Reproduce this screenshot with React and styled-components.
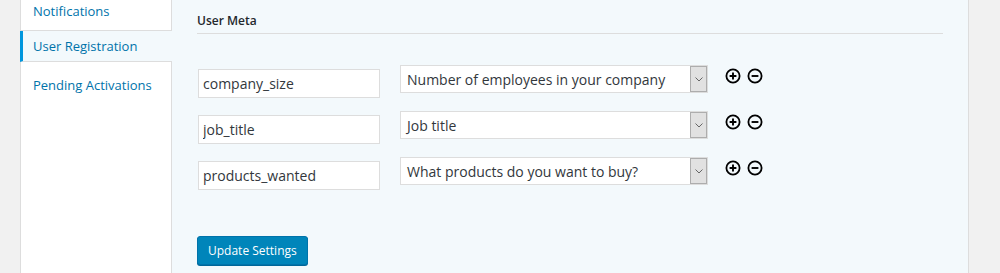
import React from 'react';
import styled, { createGlobalStyle } from 'styled-components';

const GlobalStyle = createGlobalStyle`
  html, body {
    margin: 0;
    padding: 0;
    background: #f1f1f1;
    font-family: "Open Sans", "Noto Sans", sans-serif;
    color: #23282d;
  }
`;

const metaRows = [
  { key: 'company_size', label: 'Number of employees in your company' },
  { key: 'job_title', label: 'Job title' },
  { key: 'products_wanted', label: 'What products do you want to buy?' },
];

const PlusIcon = () => (
  <svg width="16" height="16" viewBox="0 0 16 16">
    <circle cx="8" cy="8" r="6.6" fill="none" stroke="#000" strokeWidth="1.8" />
    <path d="M8 4.6v6.8M4.6 8h6.8" stroke="#000" strokeWidth="1.9" />
  </svg>
);

const MinusIcon = () => (
  <svg width="16" height="16" viewBox="0 0 16 16">
    <circle cx="8" cy="8" r="6.6" fill="none" stroke="#000" strokeWidth="1.8" />
    <path d="M4.6 8h6.8" stroke="#000" strokeWidth="1.9" />
  </svg>
);

const Chevron = () => (
  <svg width="8" height="5" viewBox="0 0 8 5">
    <path d="M0.5 0.5L4 4l3.5-3.5" fill="none" stroke="#666" strokeWidth="1" />
  </svg>
);

const App = () => {
  return (
    <Page>
      <GlobalStyle />
      <Sidebar>
        <Tab first>Notifications</Tab>
        <Tab active>User Registration</Tab>
        <Tab last>Pending Activations</Tab>
      </Sidebar>
      <Content>
        <Heading>User Meta</Heading>
        <Rows>
          {metaRows.map((row) => (
            <Row key={row.key}>
              <TextInput defaultValue={row.key} />
              <Select>
                <span>{row.label}</span>
                <Arrow>
                  <Chevron />
                </Arrow>
              </Select>
              <Actions>
                <PlusIcon />
                <MinusIcon />
              </Actions>
            </Row>
          ))}
        </Rows>
        <Button>Update Settings</Button>
      </Content>
    </Page>
  );
};

export default App;

const Page = styled.div`
  display: flex;
  align-items: stretch;
  height: 273px;
  padding-left: 20px;
  overflow: hidden;
`;

const Sidebar = styled.div`
  width: 150px;
  flex-shrink: 0;
  background: #fff;
  border-left: 1px solid #ddd;
  border-right: 1px solid #ddd;
  position: relative;
  z-index: 1;
`;

const Tab = styled.div`
  height: ${(p) => (p.last ? 'auto' : p.first ? '30px' : '30px')};
  line-height: ${(p) => (p.active ? '30px' : '22px')};
  padding-left: ${(p) => (p.active ? '10px' : '12px')};
  padding-top: ${(p) => (p.last ? '12px' : '0')};
  font-size: 13px;
  color: #0073aa;
  border-bottom: ${(p) => (p.last ? 'none' : '1px solid #ddd')};
  border-left: ${(p) => (p.active ? '3px solid #0096dd' : 'none')};
  margin-left: ${(p) => (p.active ? '-1px' : '0')};
  margin-right: ${(p) => (p.active ? '-1px' : '0')};
  background: ${(p) => (p.active ? '#f3f9fc' : 'transparent')};
`;

const Content = styled.div`
  width: 746px;
  flex-shrink: 0;
  background: #f3f9fc;
  border-right: 1px solid #ddd;
  padding: 0 25px;
`;

const Heading = styled.h3`
  margin: 0;
  padding: 12px 0 4px;
  font-size: 12px;
  line-height: 17px;
  font-weight: 600;
  color: #23282d;
  border-bottom: 1px solid #ddd;
`;

const Rows = styled.div`
  display: flex;
  flex-direction: column;
  gap: 13px;
  margin-top: 31px;
`;

const Row = styled.div`
  display: flex;
  align-items: flex-start;
`;

const TextInput = styled.input`
  box-sizing: border-box;
  width: 182px;
  height: 29px;
  margin: 4px 0 0 1px;
  padding: 0 4px;
  border: 1px solid #ddd;
  background: #fff;
  font-family: "Open Sans", "Noto Sans", sans-serif;
  font-size: 14px;
  color: #32373c;
  outline: none;
`;

const Select = styled.div`
  box-sizing: border-box;
  display: flex;
  align-items: center;
  justify-content: space-between;
  width: 308px;
  height: 28px;
  margin-left: 20px;
  padding-left: 6px;
  border: 1px solid #ddd;
  background: #fff;
  font-size: 14px;
  color: #32373c;
`;

const Arrow = styled.div`
  display: flex;
  align-items: center;
  justify-content: center;
  width: 17px;
  height: 26px;
  background: #e1e1e1;
  border: 1px solid #adadad;
  box-sizing: border-box;
`;

const Actions = styled.div`
  display: flex;
  gap: 6px;
  margin: 3px 0 0 17px;
`;

const Button = styled.button`
  display: block;
  margin-top: 46px;
  height: 29px;
  padding: 0 10px;
  background: #0085ba;
  border: 1px solid #0073aa;
  border-radius: 3px;
  box-shadow: 0 1px 0 #006799;
  color: #fff;
  font-family: "Open Sans", "Noto Sans", sans-serif;
  font-size: 12px;
`;
